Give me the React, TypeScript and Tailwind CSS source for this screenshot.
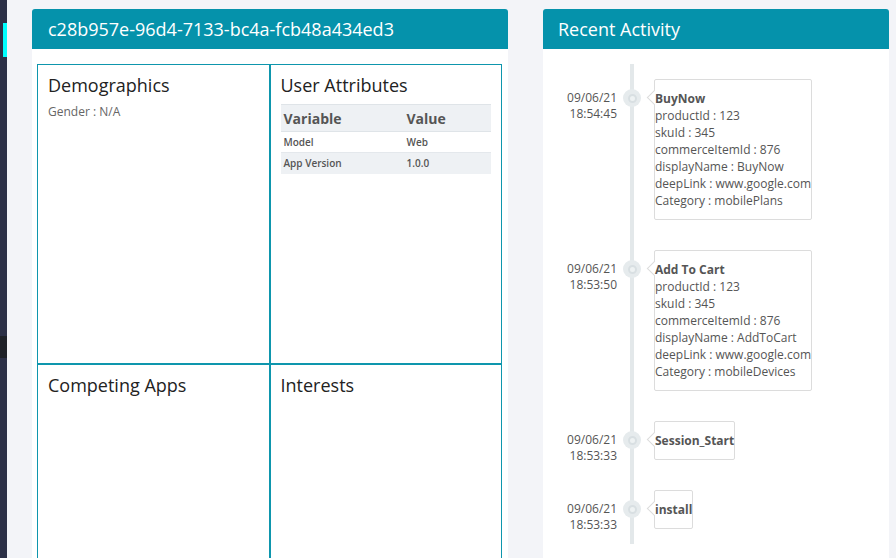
import React from "react";

const font = { fontFamily: '"Open Sans", "Noto Sans", Arial, sans-serif' };

type Ev = { date: string; time: string; title: string; lines: string[] };

const events: Ev[] = [
  {
    date: "09/06/21",
    time: "18:54:45",
    title: "BuyNow",
    lines: [
      "productId : 123",
      "skuId : 345",
      "commerceItemId : 876",
      "displayName : BuyNow",
      "deepLink : www.google.com",
      "Category : mobilePlans",
    ],
  },
  {
    date: "09/06/21",
    time: "18:53:50",
    title: "Add To Cart",
    lines: [
      "productId : 123",
      "skuId : 345",
      "commerceItemId : 876",
      "displayName : AddToCart",
      "deepLink : www.google.com",
      "Category : mobileDevices",
    ],
  },
  { date: "09/06/21", time: "18:53:33", title: "Session_Start", lines: [] },
  { date: "09/06/21", time: "18:53:33", title: "install", lines: [] },
];

function Cell({ title, children }: { title: string; children?: React.ReactNode }) {
  return (
    <div className="h-[300px] border border-[#0e96ad] px-[10px] pt-[8px]">
      <div className="text-[18px] leading-[24px] text-[#222]">{title}</div>
      {children}
    </div>
  );
}

export default function App() {
  return (
    <div className="flex h-[558px] w-[896px] overflow-hidden" style={font}>
      <div className="flex w-[7px] shrink-0 flex-col bg-[#2c3047]">
        <div className="ml-[3px] mt-[23px] h-[34px] w-[4px] shrink-0 bg-[#00ffff]" />
        <div className="mt-[279px] h-[22px] w-[7px] shrink-0 bg-[#1f2128]" />
      </div>
      <div className="flex flex-1 gap-[35px] bg-[#f3f4f8] pl-[25px] pr-[7px] pt-[9px]">
        {/* Left card */}
        <div className="flex w-[476px] shrink-0 flex-col">
          <div className="flex h-[40px] shrink-0 items-center rounded-t-[3px] bg-[#0592ab] px-[16px] text-[18px] text-white">
            c28b957e-96d4-7133-bc4a-fcb48a434ed3
          </div>
          <div className="flex-1 bg-white pl-[5px] pr-[6px] pt-[15px]">
            <div className="grid grid-cols-2">
              <Cell title="Demographics">
                <div className="mt-[7px] text-[12px] leading-[16px] text-[#666]">Gender : N/A</div>
              </Cell>
              <Cell title="User Attributes">
                <table className="mt-[7px] w-full border-collapse text-left text-[#555]">
                  <thead>
                    <tr className="h-[27px] border-y border-[#dfe4e8] bg-[#eef1f4]">
                      <th className="w-[123px] px-[3px] text-[14px] font-bold">Variable</th>
                      <th className="px-[3px] text-[14px] font-bold">Value</th>
                    </tr>
                  </thead>
                  <tbody className="text-[10px] font-semibold">
                    <tr className="h-[21px] border-b border-[#e4e8ec]">
                      <td className="px-[3px]">Model</td>
                      <td className="px-[3px]">Web</td>
                    </tr>
                    <tr className="h-[21px] bg-[#eef1f4]">
                      <td className="px-[3px]">App Version</td>
                      <td className="px-[3px]">1.0.0</td>
                    </tr>
                  </tbody>
                </table>
              </Cell>
              <Cell title="Competing Apps" />
              <Cell title="Interests" />
            </div>
          </div>
        </div>

        {/* Right card */}
        <div className="flex w-[346px] shrink-0 flex-col">
          <div className="flex h-[40px] shrink-0 items-center rounded-t-[3px] bg-[#0592ab] px-[15px] text-[18px] text-white">
            Recent Activity
          </div>
          <div className="relative flex-1 bg-white pt-[30px]">
            <div className="absolute left-[87px] top-[15px] h-[480px] w-[4px] bg-[#e3e8ea]" />
            <div className="relative flex flex-col gap-[30px]">
              {events.map((e, i) => (
                <div key={i} className="flex items-start">
                  <div className="h-[39px] w-[74px] shrink-0 pt-[11px] text-right text-[12px] leading-[16px] text-[#555]">
                    <div>{e.date}</div>
                    <div>{e.time}</div>
                  </div>
                  <div className="ml-[6px] mt-[10px] flex h-[18px] w-[18px] shrink-0 items-center justify-center rounded-full bg-[#e6ebed]">
                    <div className="h-[9px] w-[9px] rounded-full border-2 border-[#d8dfe2] bg-[#eef2f3]" />
                  </div>
                  <div className="relative ml-[13px] w-fit rounded-[2px] border border-[#dcdcdc] bg-white py-[10px] text-[12px] leading-[17px] text-[#555]">
                    <div className="absolute left-[-6px] top-[12px] h-[11px] w-[11px] rotate-45 border-b border-l border-[#dcdcdc] bg-white" />
                    <div className="relative whitespace-nowrap font-bold">{e.title}</div>
                    {e.lines.map((l) => (
                      <div key={l} className="relative whitespace-nowrap">
                        {l}
                      </div>
                    ))}
                  </div>
                </div>
              ))}
            </div>
          </div>
        </div>
      </div>
    </div>
  );
}
